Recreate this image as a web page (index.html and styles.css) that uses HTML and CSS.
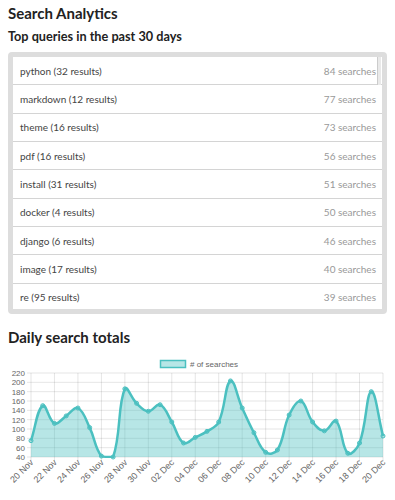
FILE: index.html
```html
<!DOCTYPE html>
<html lang="en">
<head>
  <meta charset="UTF-8" />
  <meta name="viewport" content="width=device-width, initial-scale=1.0"/>
  <title>Search Analytics</title>
  <link rel="stylesheet" href="styles.css">
</head>
<body>
  <h1 class="title">Search Analytics</h1>
  <h2 class="subtitle">Top queries in the past 30 days</h2>

  <div class="queries">
    <ul class="query-list">
      <li class="query"><span class="query-name">python (32 results)</span><span class="query-count">84 searches</span></li>
      <li class="query"><span class="query-name">markdown (12 results)</span><span class="query-count">77 searches</span></li>
      <li class="query"><span class="query-name">theme (16 results)</span><span class="query-count">73 searches</span></li>
      <li class="query"><span class="query-name">pdf (16 results)</span><span class="query-count">56 searches</span></li>
      <li class="query"><span class="query-name">install (31 results)</span><span class="query-count">51 searches</span></li>
      <li class="query"><span class="query-name">docker (4 results)</span><span class="query-count">50 searches</span></li>
      <li class="query"><span class="query-name">django (6 results)</span><span class="query-count">46 searches</span></li>
      <li class="query"><span class="query-name">image (17 results)</span><span class="query-count">40 searches</span></li>
      <li class="query"><span class="query-name">re (95 results)</span><span class="query-count">39 searches</span></li>
    </ul>
    <div class="scroll-thumb"></div>
  </div>

  <h2 class="section-title">Daily search totals</h2>

  <svg class="chart" id="chart" viewBox="8 350 379 150" width="379" height="150"></svg>

  <script>
    (function () {
      var data = [75, 150, 112, 128, 145, 103, 42, 40, 186, 155, 138, 152, 115, 70, 82,
                  95, 115, 203, 145, 92, 50, 55, 130, 160, 115, 96, 117, 48, 70, 180, 85];

      var x0 = 31, x1 = 383, y0 = 373, y1 = 457;
      var svg = document.getElementById('chart');
      var NS = 'http://www.w3.org/2000/svg';

      function el(name, attrs, text, parent) {
        var node = document.createElementNS(NS, name);
        for (var k in attrs) node.setAttribute(k, attrs[k]);
        if (text) node.textContent = text;
        (parent || svg).appendChild(node);
        return node;
      }

      function px(i) { return x0 + (x1 - x0) * i / (data.length - 1); }
      function py(v) { return y1 - (v - 40) * (y1 - y0) / 180; }
      function cap(p) {
        return [Math.min(x1, Math.max(x0, p[0])), Math.min(y1, Math.max(y0, p[1]))];
      }

      // clip to the plot area
      var defs = el('defs', {});
      var clip = el('clipPath', { id: 'plot' }, null, defs);
      el('rect', { x: x0 - 2, y: y0, width: x1 - x0 + 4, height: y1 - y0 + 1 }, null, clip);

      // legend
      el('rect', { x: 160.5, y: 360.5, width: 25, height: 7, class: 'legend-box' });
      el('text', { x: 190, y: 367, class: 'legend-label' }, '# of searches');

      // horizontal grid + y labels
      for (var v = 40; v <= 220; v += 20) {
        var y = py(v);
        el('line', { x1: 27, x2: x1, y1: y, y2: y, class: 'grid' });
        el('text', { x: 25, y: y + 3, class: 'tick-y' }, String(v));
      }

      // vertical grid + x labels
      for (var i = 0; i < data.length; i += 2) {
        var x = px(i);
        var day = i <= 10 ? 20 + i : i - 10;
        var label = (day < 10 ? '0' + day : day) + (i <= 10 ? ' Nov' : ' Dec');
        var ax = x + 3, ay = y1 + 6;
        el('line', { x1: x, x2: x, y1: y0, y2: y1 + 4, class: 'grid' });
        el('text', { x: ax, y: ay, class: 'tick-x',
                     transform: 'rotate(-45 ' + ax + ' ' + ay + ')' }, label);
      }

      // bezier line, 0.4 tension, control points kept inside the plot
      var pts = data.map(function (v, i) { return [px(i), py(v)]; });
      var ctrl = pts.map(function (p, i) {
        var a = pts[i - 1] || p, b = pts[i + 1] || p;
        var d01 = Math.hypot(p[0] - a[0], p[1] - a[1]);
        var d12 = Math.hypot(b[0] - p[0], b[1] - p[1]);
        var sum = d01 + d12 || 1;
        var fa = 0.4 * d01 / sum, fb = 0.4 * d12 / sum;
        return {
          prev: cap([p[0] - fa * (b[0] - a[0]), p[1] - fa * (b[1] - a[1])]),
          next: cap([p[0] + fb * (b[0] - a[0]), p[1] + fb * (b[1] - a[1])])
        };
      });

      var d = 'M' + pts[0][0] + ',' + pts[0][1];
      for (var j = 1; j < pts.length; j++) {
        d += ' C' + ctrl[j - 1].next.join(',') + ' ' + ctrl[j].prev.join(',') + ' ' + pts[j].join(',');
      }

      el('path', { d: d + ' L' + x1 + ',' + y1 + ' L' + x0 + ',' + y1 + ' Z',
                   class: 'area', 'clip-path': 'url(#plot)' });
      el('path', { d: d, class: 'line', 'clip-path': 'url(#plot)' });

      pts.forEach(function (p) {
        el('circle', { cx: p[0], cy: p[1], r: 2, class: 'point' });
      });
    })();
  </script>
</body>
</html>
```

FILE: styles.css
```css
body {
  margin: 0;
  padding: 0 8px;
  font-family: Lato, "Open Sans", sans-serif;
  color: #222;
  background: #fff;
}

.title {
  margin: 4px 0 0;
  font-size: 15px;
  line-height: 18px;
  font-weight: 700;
}

.subtitle {
  margin: 7px 0 0;
  font-size: 12.7px;
  line-height: 14px;
  font-weight: 700;
}

.queries {
  position: relative;
  margin-top: 9px;
  border: 5px solid #ddd;
  border-radius: 4px;
  background: #fff;
}

.query-list {
  list-style: none;
  margin: 0;
  padding: 0;
  height: 252px;
  overflow: hidden;
}

.query {
  display: flex;
  justify-content: space-between;
  align-items: center;
  box-sizing: border-box;
  height: 28.33px;
  padding: 0 6px 0 7px;
  border-bottom: 1px solid #d4d4d4;
  font-size: 10px;
}

.query-name {
  color: #444;
}

.query-count {
  color: #999;
}

.scroll-thumb {
  position: absolute;
  top: 0;
  right: 1px;
  width: 3px;
  height: 28px;
  background: #e9e9e9;
  border-left: 1px solid #ccc;
}

.section-title {
  margin: 14px 0 0;
  font-size: 15px;
  line-height: 18px;
  font-weight: 700;
}

.chart {
  display: block;
  margin-top: 4px;
  font-family: "Liberation Sans", Arial, sans-serif;
}

.grid {
  stroke: rgba(0, 0, 0, 0.1);
  stroke-width: 1;
}

.tick-y {
  font-size: 8px;
  fill: #666;
  text-anchor: end;
}

.tick-x {
  font-size: 9px;
  fill: #666;
  text-anchor: end;
}

.legend-box {
  fill: rgba(75, 192, 192, 0.4);
  stroke: rgb(75, 192, 192);
  stroke-width: 1.5;
}

.legend-label {
  font-size: 8px;
  fill: #666;
}

.area {
  fill: rgba(75, 192, 192, 0.4);
}

.line {
  fill: none;
  stroke: rgb(75, 192, 192);
  stroke-width: 2.5;
}

.point {
  fill: rgba(75, 192, 192, 0.4);
  stroke: rgb(75, 192, 192);
  stroke-width: 1;
}
```
